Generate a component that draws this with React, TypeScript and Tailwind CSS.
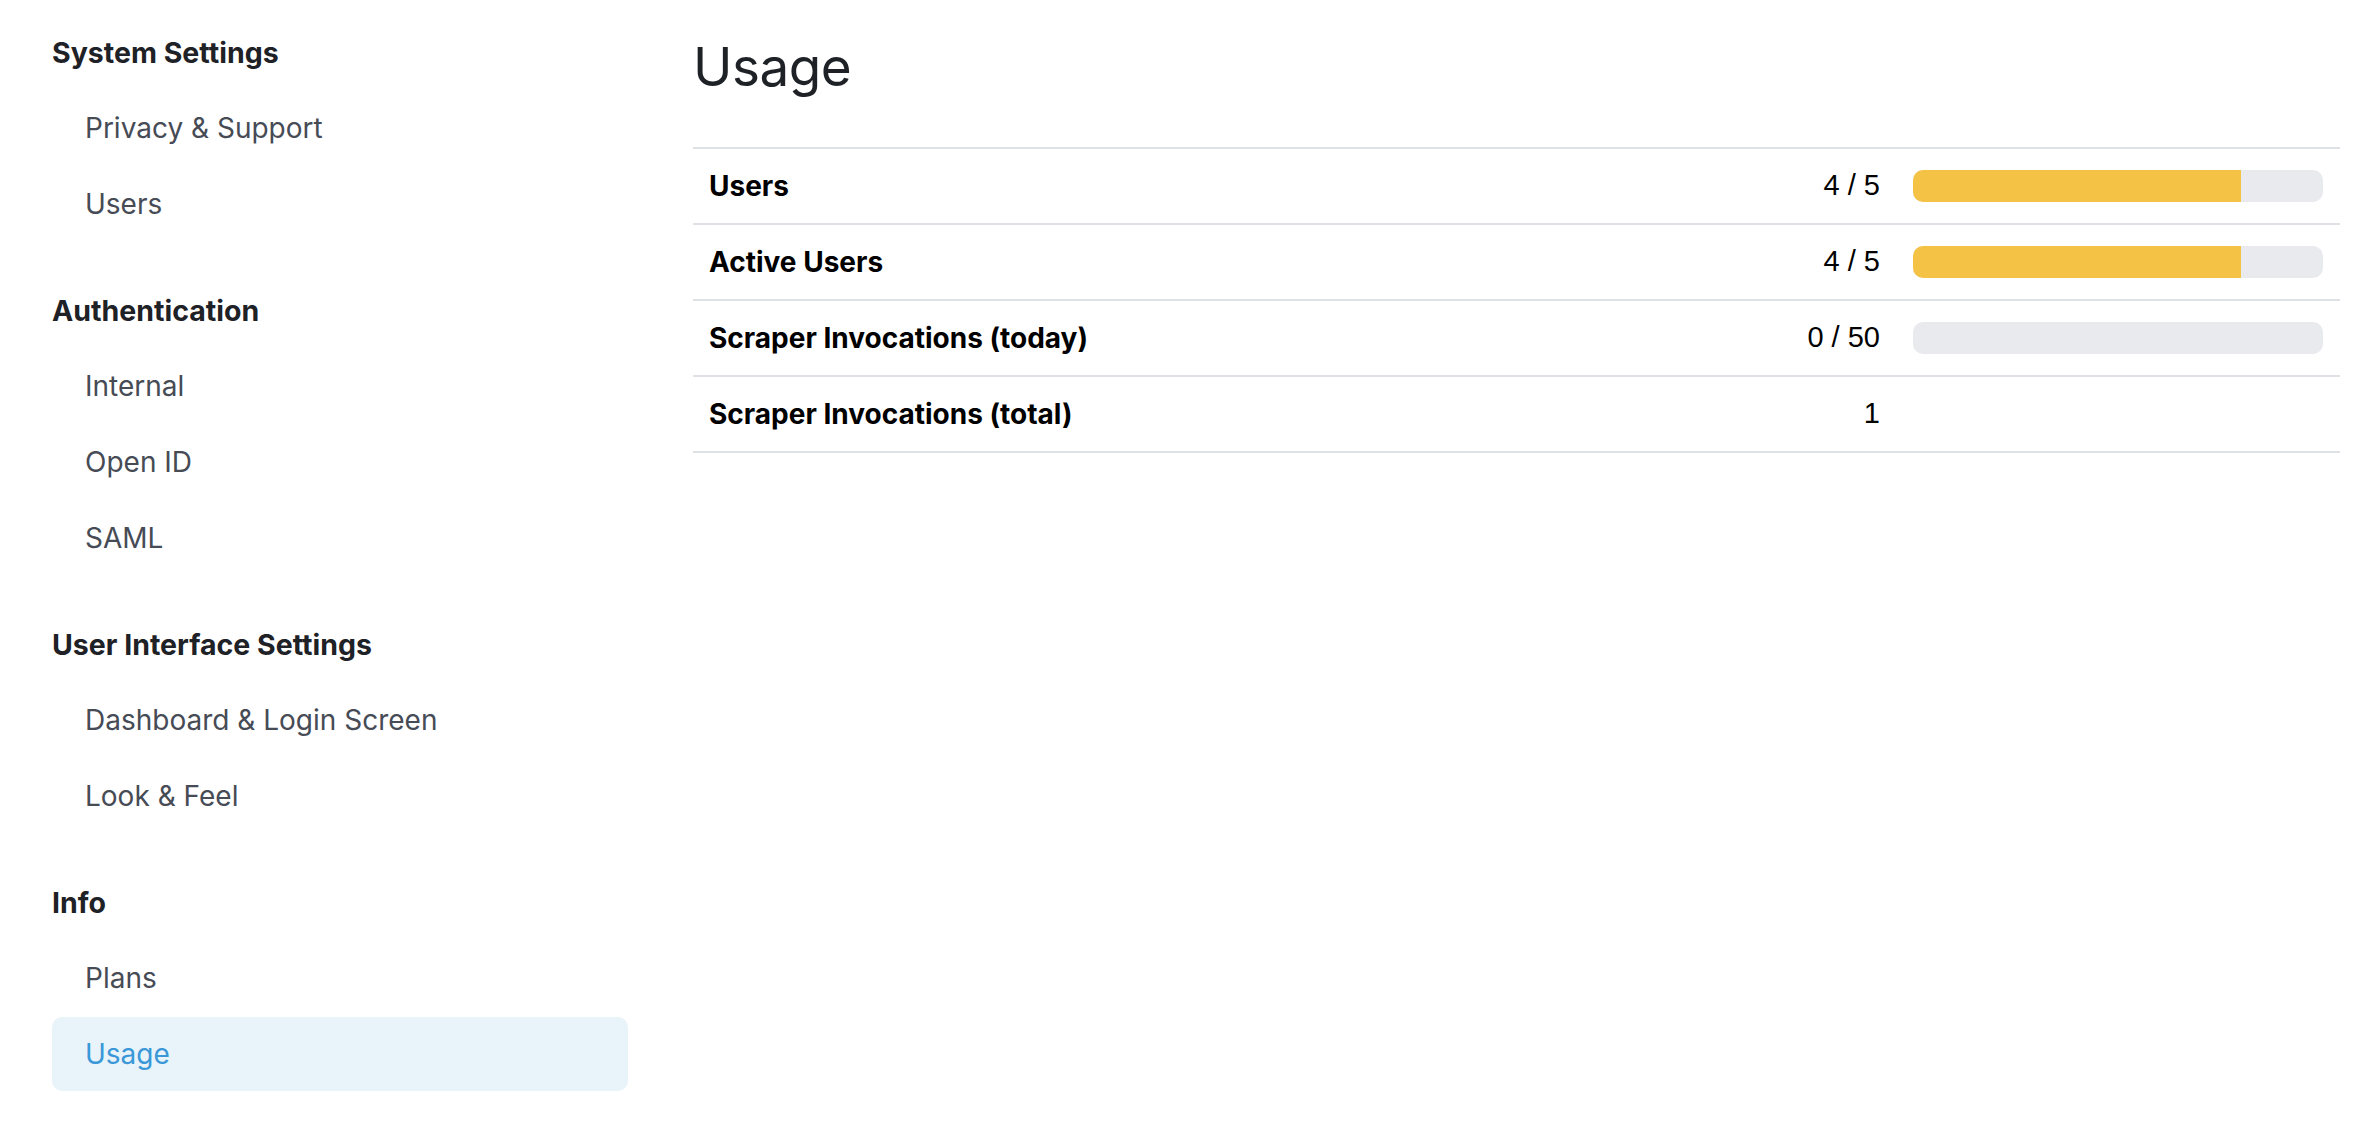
import React from 'react';

type NavSection = { title: string; items: string[] };

const sections: NavSection[] = [
  { title: 'System Settings', items: ['Privacy & Support', 'Users'] },
  { title: 'Authentication', items: ['Internal', 'Open ID', 'SAML'] },
  { title: 'User Interface Settings', items: ['Dashboard & Login Screen', 'Look & Feel'] },
  { title: 'Info', items: ['Plans', 'Usage'] },
];

type UsageRow = { label: string; used: number; limit?: number };

const rows: UsageRow[] = [
  { label: 'Users', used: 4, limit: 5 },
  { label: 'Active Users', used: 4, limit: 5 },
  { label: 'Scraper Invocations (today)', used: 0, limit: 50 },
  { label: 'Scraper Invocations (total)', used: 1 },
];

function Sidebar({ active }: { active: string }) {
  return (
    <nav className="w-[576px] shrink-0 pt-[15px] flex flex-col gap-8">
      {sections.map((section) => (
        <div key={section.title} className="flex flex-col">
          <div className="h-[76px] flex items-center text-[28.5px] font-bold text-[#1e2126]">
            {section.title}
          </div>
          {section.items.map((item) => {
            const isActive = item === active;
            return (
              <a
                key={item}
                href="#"
                className={`h-[74px] mb-[2px] last:mb-0 flex items-center pl-[33px] rounded-[10px] text-[28px] ${
                  isActive ? 'bg-[#e8f3fa] text-[#3a98d8]' : 'text-[#464b55]'
                }`}
              >
                {item}
              </a>
            );
          })}
        </div>
      ))}
    </nav>
  );
}

function UsageTable() {
  return (
    <div className="border-t-2 border-[#dee1e5]">
      {rows.map((row) => {
        const pct = row.limit ? Math.min(100, (row.used / row.limit) * 100) : 0;
        return (
          <div key={row.label} className="h-[76px] flex items-center border-b-2 border-[#dee1e5]">
            <div className="flex-1 pl-4 text-[28px] font-bold text-black">{row.label}</div>
            <div className="text-right text-[29px] text-black font-['Liberation_Sans',Arial,sans-serif]">
              {row.limit !== undefined ? `${row.used} / ${row.limit}` : row.used}
            </div>
            <div className="w-[410px] ml-[33px] mr-[17px]">
              {row.limit !== undefined && (
                <div className="h-8 rounded-[10px] bg-[#e9eaee] overflow-hidden">
                  <div className="h-full bg-[#f4c345]" style={{ width: `${pct}%` }} />
                </div>
              )}
            </div>
          </div>
        );
      })}
    </div>
  );
}

export default function App() {
  return (
    <div className="min-h-screen bg-white font-['Inter','Noto_Sans',sans-serif] flex pl-[52px] pr-8">
      <Sidebar active="Usage" />
      <main className="flex-1 ml-[65px]">
        <h1 className="mt-[36px] mb-[49px] text-[53px] leading-[62px] font-normal text-[#1e2126] tracking-[-0.5px]">
          Usage
        </h1>
        <UsageTable />
      </main>
    </div>
  );
}
